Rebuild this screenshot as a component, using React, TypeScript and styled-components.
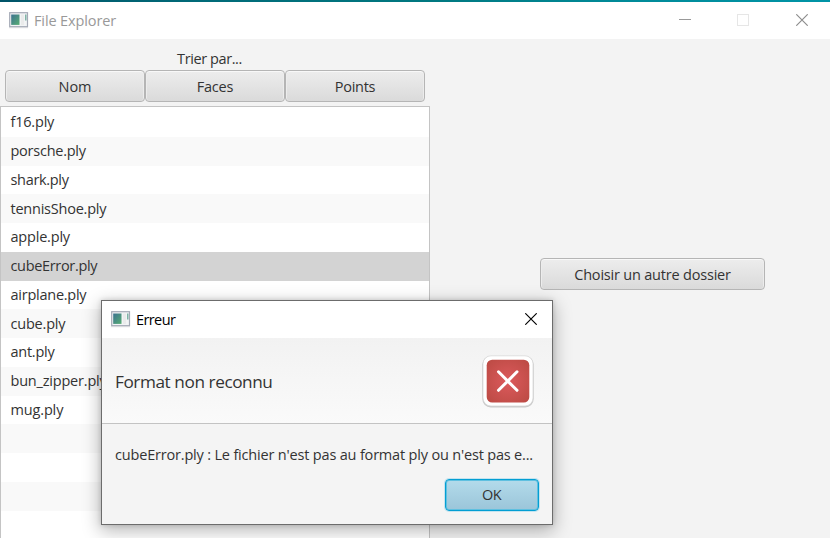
import React from "react";
import styled, { createGlobalStyle } from "styled-components";

const GlobalStyle = createGlobalStyle`
  html, body { margin: 0; padding: 0; }
  body {
    font-family: "Open Sans", "Noto Sans", sans-serif;
    font-size: 14.5px;
    color: #333;
    overflow: hidden;
  }
  * { box-sizing: border-box; }
`;

const Screen = styled.div`
  position: relative;
  width: 830px;
  height: 538px;
  overflow: hidden;
  display: flex;
  flex-direction: column;
  background: #f3f3f3;
`;

const DesktopStrip = styled.div`
  flex: none;
  height: 2px;
  background: linear-gradient(90deg, #005468 0, #006a78 200px, #007880 430px, #008a98 620px, #0094a6 100%);
`;

const TitleBar = styled.header<{ $height: number; $active?: boolean }>`
  flex: none;
  display: flex;
  align-items: center;
  height: ${(p) => p.$height}px;
  padding-left: 9px;
  background: #fff;
  color: ${(p) => (p.$active ? "#000" : "#999")};
`;

const Label = styled.span<{ $spacing?: number; $size?: number }>`
  display: block;
  white-space: pre;
  line-height: 20px;
  font-size: ${(p) => p.$size ?? 14.5}px;
  letter-spacing: ${(p) => p.$spacing ?? -0.2}px;
`;

const TitleText = styled(Label)`
  flex: 1;
  margin-left: 5px;
`;

const WindowControls = styled.div<{ $right: number }>`
  display: grid;
  grid-auto-flow: column;
  grid-template-columns: ${(p) => (p.$right > 20 ? "58px 59px 12px" : "12px")};
  margin: 0 ${(p) => p.$right}px 1px 0;
`;

const Body = styled.main`
  flex: 1;
  display: flex;
  min-height: 0;
`;

const FilePane = styled.section`
  width: 430px;
  display: flex;
  flex-direction: column;
`;

const SortTitle = styled.div`
  display: flex;
  justify-content: center;
  height: 31px;
  padding: 10px 11px 0 0;
`;

const SortBar = styled.div`
  display: flex;
  padding: 0 5px;
  height: 32px;
`;

const Button = styled.button<{ $width: number; $primary?: boolean }>`
  display: flex;
  align-items: center;
  justify-content: center;
  width: ${(p) => p.$width}px;
  height: 32px;
  padding: ${(p) => (p.$primary ? "0 1px 1px 0" : "1px 0 0")};
  font: inherit;
  color: #333;
  border: 1px solid ${(p) => (p.$primary ? "#039ed3" : "#b5b5b5")};
  border-radius: 4px;
  background: ${(p) =>
    p.$primary ? "linear-gradient(#b3dbeb, #9bc5d9)" : "linear-gradient(#ededed, #dadada)"};
  box-shadow: ${(p) =>
    p.$primary
      ? "inset 0 0 0 1px #5fc0e0, 0 0 0 1px #c4e4ef"
      : "inset 0 1px 0 #f8f8f8, inset 1px 0 0 #ececec, inset -1px 0 0 #ececec"};
`;

const FileList = styled.ul`
  flex: 1;
  margin: 4px 0 0;
  padding: 1.1px 0 0;
  list-style: none;
  overflow: hidden;
  border: 1px solid #c4c4c4;
  border-bottom: 0;
  background: #fff;
`;

const FileRow = styled.li<{ $selected?: boolean }>`
  display: flex;
  align-items: center;
  height: 28.75px;
  padding-left: 9.5px;
  background: #fff;
  &:nth-child(even) { background: #f9f9f9; }
  ${(p) => p.$selected && "&&:nth-child(n) { background: #d3d3d3; }"}
`;

const ActionPane = styled.section`
  flex: 1;
  display: flex;
  flex-direction: column;
  align-items: center;
  padding: 219px 0 0 45px;
`;

const Dialog = styled.div`
  position: absolute;
  left: 101px;
  top: 300px;
  width: 452px;
  height: 225px;
  display: flex;
  flex-direction: column;
  border: 1px solid #6c6c6c;
  background: #f4f4f4;
  box-shadow: 0 5px 17px 1px rgba(0, 0, 0, 0.28), 0 0 5px rgba(0, 0, 0, 0.16);
`;

const DialogHeader = styled.div`
  display: flex;
  align-items: center;
  justify-content: space-between;
  height: 86px;
  padding: 1px 18px 0 13px;
  background: linear-gradient(#f2f2f2, #fafafa);
  border-bottom: 1px solid #c3c3c3;
`;

const HeaderText = styled(Label)`
  margin-top: 2px;
`;

const DialogContent = styled.div`
  padding: 21px 0 0 13px;
`;

const DialogActions = styled.div`
  display: flex;
  justify-content: flex-end;
  padding: 14px 13px 0 0;
`;

function AppIcon() {
  return (
    <svg width="20" height="17" viewBox="0 0 20 17">
      <defs>
        <linearGradient id="screenFill" x1="0" y1="0" x2="1" y2="1">
          <stop offset="0" stopColor="#3c7290" />
          <stop offset="1" stopColor="#57ad73" />
        </linearGradient>
      </defs>
      <rect x="0.7" y="0.7" width="17.8" height="14" fill="#f2f4f5" stroke="#a4a9b5" strokeWidth="1.2" />
      <path d="M0 15.7H19" stroke="#cfd0d4" strokeWidth="0.8" />
      <rect x="2.2" y="2.5" width="8.3" height="10.4" fill="url(#screenFill)" />
      <rect x="12" y="2.5" width="3" height="10.5" fill="#eaebeb" />
      <path d="M16.8 2.5V8.5" stroke="#63a493" strokeWidth="1.2" />
    </svg>
  );
}

function CloseIcon({ color }: { color: string }) {
  return (
    <svg width="12" height="12" viewBox="0 0 12 12">
      <path d="M0.3 0.3L11.7 11.7M11.7 0.3L0.3 11.7" stroke={color} strokeWidth="1.15" />
    </svg>
  );
}

function ErrorIcon() {
  return (
    <svg width="52" height="53" viewBox="0 0 52 53">
      <defs>
        <radialGradient id="errorFill" cx="0.5" cy="0.5" r="0.65">
          <stop offset="0" stopColor="#dc5a5c" />
          <stop offset="1" stopColor="#bd4b45" />
        </radialGradient>
      </defs>
      <rect x="0.3" y="1" width="51.4" height="51.4" rx="8.5" fill="#c9c9c9" />
      <rect x="1" y="0.8" width="50" height="50.2" rx="8" fill="#fff" stroke="#d5d5d5" strokeWidth="0.7" />
      <rect x="4.7" y="4.7" width="42.6" height="42.8" rx="5.5" fill="url(#errorFill)" />
      <path d="M16.5 16.8L35 35.3M35 16.8L16.5 35.3" stroke="#fff" strokeWidth="3" strokeLinecap="round" />
    </svg>
  );
}

const files: { name: string; spacing: number }[] = [
  { name: "f16.ply", spacing: -0.2 },
  { name: "porsche.ply", spacing: -0.25 },
  { name: "shark.ply", spacing: -0.32 },
  { name: "tennisShoe.ply", spacing: -0.23 },
  { name: "apple.ply", spacing: -0.2 },
  { name: "cubeError.ply", spacing: -0.33 },
  { name: "airplane.ply", spacing: -0.25 },
  { name: "cube.ply", spacing: -0.2 },
  { name: "ant.ply", spacing: -0.25 },
  { name: "bun_zipper.ply", spacing: -0.2 },
  { name: "mug.ply", spacing: -0.15 },
  { name: "", spacing: 0 },
  { name: "", spacing: 0 },
  { name: "", spacing: 0 },
  { name: "", spacing: 0 },
];

export default function App() {
  return (
    <>
      <GlobalStyle />
      <Screen>
        <DesktopStrip />
        <TitleBar $height={37}>
          <AppIcon />
          <TitleText $spacing={-0.12}>File Explorer</TitleText>
          <WindowControls $right={22}>
            <svg width="12" height="12" viewBox="0 0 12 12">
              <path d="M0 5.5H12" stroke="#999" />
            </svg>
            <svg width="12" height="12" viewBox="0 0 12 12">
              <rect x="0.5" y="0.5" width="11" height="11" fill="none" stroke="#e6e6e6" />
            </svg>
            <CloseIcon color="#8c8c8c" />
          </WindowControls>
        </TitleBar>
        <Body>
          <FilePane>
            <SortTitle>
              <Label $spacing={-0.4}>Trier par...</Label>
            </SortTitle>
            <SortBar>
              <Button $width={140}><Label $spacing={-0.1}>Nom</Label></Button>
              <Button $width={140}><Label>Faces</Label></Button>
              <Button $width={140}><Label $spacing={-0.25}>Points</Label></Button>
            </SortBar>
            <FileList>
              {files.map((file, i) => (
                <FileRow key={i} $selected={file.name === "cubeError.ply"}>
                  <Label $spacing={file.spacing}>{file.name}</Label>
                </FileRow>
              ))}
            </FileList>
          </FilePane>
          <ActionPane>
            <Button $width={225}><Label>Choisir un autre dossier</Label></Button>
          </ActionPane>
        </Body>
        <Dialog role="dialog">
          <TitleBar $height={37} $active>
            <AppIcon />
            <TitleText $spacing={-0.6}>Erreur</TitleText>
            <WindowControls $right={15}>
              <CloseIcon color="#000" />
            </WindowControls>
          </TitleBar>
          <DialogHeader>
            <HeaderText $size={17.2} $spacing={-0.42}>Format non reconnu</HeaderText>
            <ErrorIcon />
          </DialogHeader>
          <DialogContent>
            <Label $spacing={-0.18}>cubeError.ply : Le fichier n'est pas au format ply ou n'est pas e...</Label>
          </DialogContent>
          <DialogActions>
            <Button $width={94} $primary><Label $spacing={-0.5}>OK</Label></Button>
          </DialogActions>
        </Dialog>
      </Screen>
    </>
  );
}
